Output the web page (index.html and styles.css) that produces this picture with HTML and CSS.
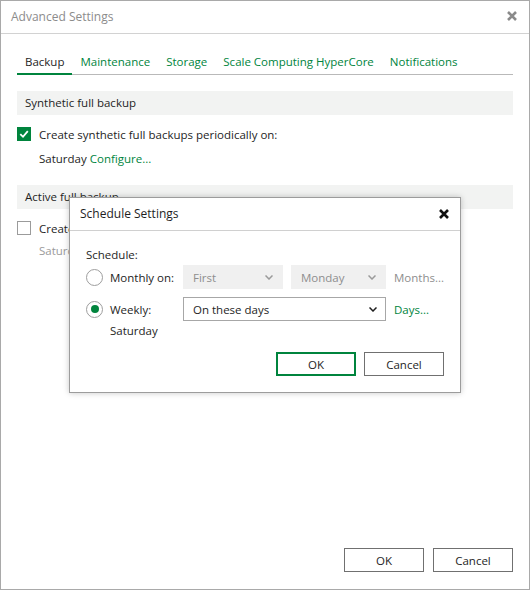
FILE: index.html
```html
<!DOCTYPE html>
<html lang="en">
<head>
<meta charset="utf-8">
<title>Advanced Settings</title>
<link rel="stylesheet" href="styles.css">
</head>
<body>
<div class="window">
  <div class="titlebar">
    <span class="title">Advanced Settings</span>
    <svg class="close close-muted" width="10" height="10" viewBox="0 0 10 10"><path d="M1 1L9 9M9 1L1 9"/></svg>
  </div>

  <div class="content">
    <nav class="tabs">
      <span class="tab active">Backup</span>
      <span class="tab">Maintenance</span>
      <span class="tab">Storage</span>
      <span class="tab">Scale Computing HyperCore</span>
      <span class="tab">Notifications</span>
    </nav>

    <div class="section-head first">Synthetic full backup</div>
    <label class="check-row">
      <span class="checkbox checked"><svg width="14" height="14" viewBox="0 0 14 14"><path d="M3.3 7.2L6 9.8L10.8 4.2"/></svg></span>
      <span>Create synthetic full backups periodically on:</span>
    </label>
    <div class="sub-row">Saturday <a class="link">Configure...</a></div>

    <div class="section-head">Active full backup</div>
    <label class="check-row">
      <span class="checkbox"></span>
      <span>Create active full backups periodically on:</span>
    </label>
    <div class="sub-row muted">Saturday <span>Configure...</span></div>
  </div>

  <div class="footer">
    <button class="btn">OK</button>
    <button class="btn">Cancel</button>
  </div>

  <div class="dialog">
    <div class="dialog-title">
      <span>Schedule Settings</span>
      <svg class="close" width="10" height="10" viewBox="0 0 10 10"><path d="M1 1L9 9M9 1L1 9"/></svg>
    </div>
    <div class="dialog-body">
      <div class="field-label">Schedule:</div>
      <div class="schedule-grid">
        <span class="radio"></span>
        <span class="opt-label">Monthly on:</span>
        <div class="combo disabled"><span>First</span><svg width="8" height="5" viewBox="0 0 8 5"><path d="M0.5 0.5L4 4L7.5 0.5"/></svg></div>
        <div class="combo disabled"><span>Monday</span><svg width="8" height="5" viewBox="0 0 8 5"><path d="M0.5 0.5L4 4L7.5 0.5"/></svg></div>
        <span class="muted-link">Months...</span>

        <span class="radio selected"></span>
        <span class="opt-label">Weekly:</span>
        <div class="combo wide"><span>On these days</span><svg width="8" height="5" viewBox="0 0 8 5"><path d="M0.5 0.5L4 4L7.5 0.5"/></svg></div>
        <a class="link">Days...</a>
      </div>
      <div class="opt-note">Saturday</div>
      <div class="dialog-actions">
        <button class="btn primary">OK</button>
        <button class="btn">Cancel</button>
      </div>
    </div>
  </div>
</div>
</body>
</html>
```

FILE: styles.css
```css
* {
  box-sizing: border-box;
}

html, body {
  margin: 0;
  padding: 0;
  background: #ffffff;
}

body {
  font-family: "Open Sans", "Noto Sans", sans-serif;
  font-size: 11.5px;
  color: #1e1e1e;
}

.window {
  position: relative;
  width: 530px;
  height: 590px;
  border: 1px solid #a9a9a9;
  display: flex;
  flex-direction: column;
  background: #fff;
}

.titlebar {
  height: 33px;
  flex: none;
  border-bottom: 1px solid #d2d2d2;
  display: flex;
  align-items: center;
  justify-content: space-between;
  padding: 0 12px 2px 10px;
}

.title {
  color: #8c8c8c;
  font-size: 12px;
}

.close path {
  stroke: #111;
  stroke-width: 2.6;
  fill: none;
}

.close-muted path {
  stroke: #8a8a8a;
}

.content {
  padding: 17px 16px 0;
}

.tabs {
  display: flex;
  border-bottom: 1px solid #b9b9b9;
}

.tab {
  padding: 0 8px;
  line-height: 22px;
  color: #00843d;
  white-space: nowrap;
}

.tab.active {
  color: #1e1e1e;
  border-bottom: 2px solid #00843d;
  margin-bottom: -1px;
}

.section-head {
  background: #f2f3f2;
  height: 24px;
  line-height: 24px;
  padding-left: 8px;
  margin-top: 18px;
}

.section-head.first {
  margin-top: 16px;
}

.check-row {
  display: flex;
  align-items: center;
  gap: 8px;
  height: 16px;
  margin-top: 11px;
}

.checkbox {
  width: 14px;
  height: 14px;
  border: 1px solid #9b9b9b;
  background: #fff;
  flex: none;
  position: relative;
}

.checkbox.checked {
  border: none;
  background: #00843d;
}

.checkbox svg {
  display: block;
}

.checkbox path {
  stroke: #fff;
  stroke-width: 1.8;
  fill: none;
}

.sub-row {
  padding-left: 22px;
  line-height: 16px;
  margin-top: 9px;
}

.sub-row.muted {
  color: #9a9a9a;
  margin-top: 7px;
}

.link {
  color: #00843d;
  cursor: pointer;
}

.footer {
  margin-top: auto;
  display: flex;
  justify-content: flex-end;
  gap: 9px;
  padding: 0 16px 17px;
}

.btn {
  font: inherit;
  color: #1e1e1e;
  width: 80px;
  height: 24px;
  background: #fff;
  border: 1px solid #707070;
  padding: 0;
}

.btn.primary {
  border: 2px solid #00843d;
}

/* Schedule dialog floating above the settings window */
.dialog {
  position: absolute;
  left: 68px;
  top: 196px;
  width: 392px;
  height: 196px;
  background: #fff;
  border: 1px solid #9c9c9c;
  box-shadow: 0 0 6px rgba(0, 0, 0, 0.22);
}

.dialog-title {
  height: 33px;
  border-bottom: 1px solid #d0d0d0;
  display: flex;
  align-items: center;
  justify-content: space-between;
  padding: 0 11px 1px 10px;
  font-size: 12px;
}

.dialog-body {
  padding: 16px 16px 0;
}

.field-label {
  line-height: 16px;
  margin-bottom: 2px;
}

.schedule-grid {
  display: grid;
  grid-template-columns: 16px 65px 100px 95px auto;
  grid-template-rows: 24px 24px;
  column-gap: 8px;
  row-gap: 8px;
  align-items: center;
}

.radio {
  width: 17px;
  height: 17px;
  border: 1px solid #9e9e9e;
  border-radius: 50%;
  background: #fff;
  position: relative;
}

.radio.selected::after {
  content: "";
  position: absolute;
  left: 3.5px;
  top: 3.5px;
  width: 8px;
  height: 8px;
  border-radius: 50%;
  background: #00843d;
}

.opt-label {
  white-space: nowrap;
}

.opt-note {
  padding-left: 24px;
  line-height: 16px;
  margin-top: 2px;
}

.combo {
  height: 100%;
  display: flex;
  align-items: center;
  justify-content: space-between;
  padding: 0 9px 0 9px;
  border: 1px solid #a7a7a7;
  background: #fff;
}

.combo path {
  fill: none;
  stroke: #1e1e1e;
  stroke-width: 1.5;
}

.combo.disabled {
  border-color: #f0f0f0;
  background: #f0f0f0;
  color: #8e8e8e;
}

.combo.disabled path {
  stroke: #9a9a9a;
}

.combo.wide {
  grid-column: 3 / 5;
  padding-right: 8px;
}

.muted-link {
  color: #8e8e8e;
}

.dialog-actions {
  display: flex;
  justify-content: flex-end;
  gap: 8px;
  margin-top: 13px;
}
```
